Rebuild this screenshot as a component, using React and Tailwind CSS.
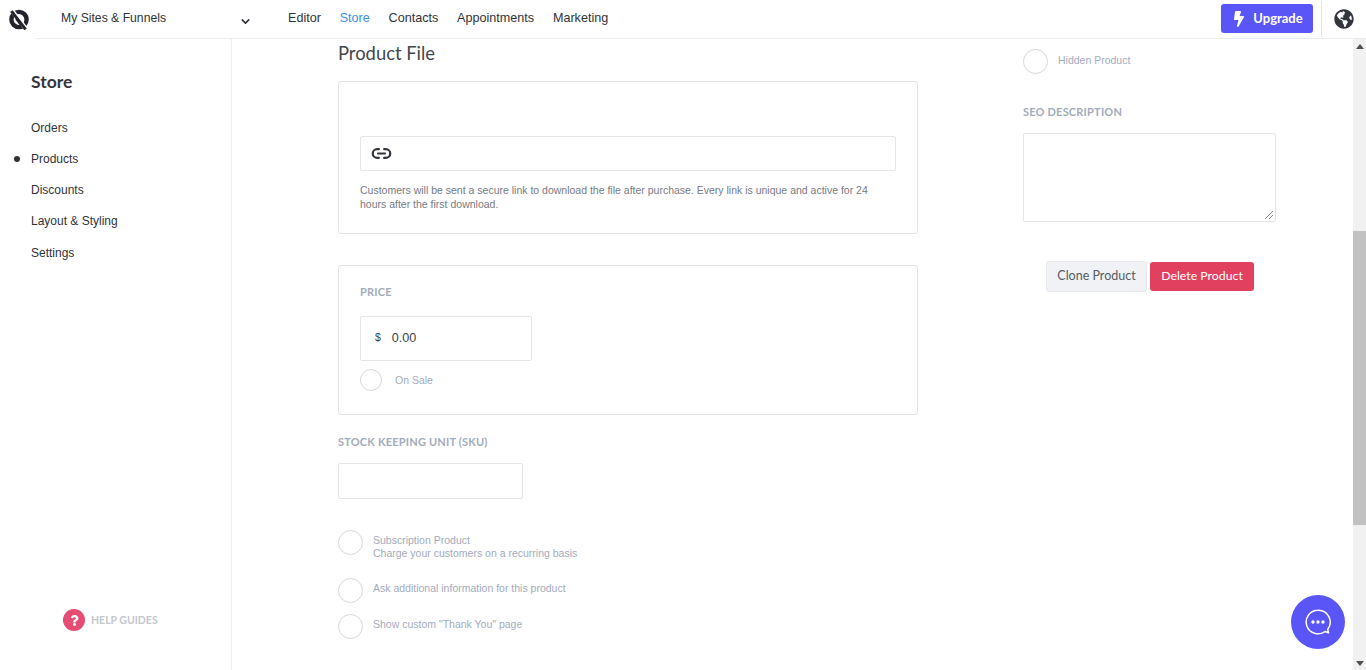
import React from 'react';
import { ChevronDown, Link2 } from 'lucide-react';
import { FaBolt, FaGlobeAmericas, FaQuestion } from 'react-icons/fa';

const navItems = ['Editor', 'Store', 'Contacts', 'Appointments', 'Marketing'];
const sideItems = ['Orders', 'Products', 'Discounts', 'Layout & Styling', 'Settings'];

const Toggle = ({ className = '' }) => (
  <span className={`block shrink-0 rounded-full border border-[#d5d8de] bg-white ${className}`} />
);

const Logo = () => (
  <svg width="20" height="21" viewBox="0 0 20 21">
    <circle cx="10" cy="10.5" r="7.6" fill="none" stroke="#23232b" strokeWidth="4.4" />
    <path d="M3 1.5 L17 20" stroke="#fff" strokeWidth="4.4" />
    <path d="M2.4 2.2 L16.6 20.4" stroke="#23232b" strokeWidth="3" />
    <path d="M7.4 9.6 L12.4 16.2" stroke="#23232b" strokeWidth="2.6" />
  </svg>
);

const ChatIcon = () => (
  <svg width="28" height="28" viewBox="0 0 28 28" fill="none">
    <path
      d="M14 2.2a11.8 11.8 0 1 0 7 21.3l3.6 1.2-.9-3.5A11.8 11.8 0 0 0 14 2.2z"
      stroke="#fff"
      strokeWidth="1.5"
      strokeLinejoin="round"
    />
    <circle cx="9" cy="14" r="1.7" fill="#fff" />
    <circle cx="14" cy="14" r="1.7" fill="#fff" />
    <circle cx="19" cy="14" r="1.7" fill="#fff" />
  </svg>
);

const Header = () => (
  <header className="flex h-[39px] shrink-0">
    <div className="flex w-[36px] shrink-0 items-center pl-[9px]">
      <Logo />
    </div>
    <div className="flex flex-1 items-center border-b border-[#ececee] pb-[1px]">
      <span className="ml-[25px] w-[178px] text-[12.2px] text-[#2f3338]">My Sites &amp; Funnels</span>
      <ChevronDown size={13} strokeWidth={3} className="mt-[5px] text-[#2f3338]" />
      <nav className="ml-[36px] flex gap-[18.8px] text-[12.6px] text-[#2f3338]">
        {navItems.map((item) => (
          <span key={item} className={item === 'Store' ? 'text-[#3f8fe0]' : ''}>
            {item}
          </span>
        ))}
      </nav>
      <button className="ml-auto flex h-[29px] w-[92px] items-center justify-center gap-[6px] rounded-[3px] bg-[#5a55f6] font-['Lato',sans-serif] text-[13px] font-bold text-white">
        <FaBolt size={16} />
        Upgrade
      </button>
      <div className="ml-[8px] flex h-[36px] w-[45px] items-center border-l border-[#e5e5e7] pl-[12px]">
        <FaGlobeAmericas size={20} className="text-[#33363d]" />
      </div>
    </div>
  </header>
);

const Sidebar = () => (
  <aside className="flex w-[232px] shrink-0 flex-col border-r border-[#ececee]">
    <h2 className="ml-[31px] mt-[32px] font-['Lato',sans-serif] text-[17.5px] font-bold leading-[22px] text-[#33373c]">
      Store
    </h2>
    <ul className="mt-[24.6px] flex flex-col gap-[11.3px] text-[12px] text-[#2f3338]">
      {sideItems.map((item) => (
        <li key={item} className="relative h-[20px] pl-[31px] leading-[20px]">
          {item === 'Products' && (
            <span className="absolute left-[14px] top-[7px] h-[6px] w-[6px] rounded-full bg-[#2f3338]" />
          )}
          {item}
        </li>
      ))}
    </ul>
    <div className="ml-[63px] mt-auto mb-[39px] flex items-center gap-[6px]">
      <span className="flex h-[22px] w-[22px] items-center justify-center rounded-full bg-[#e64d74] text-white">
        <FaQuestion size={11} />
      </span>
      <span className="translate-y-[1px] font-['Lato',sans-serif] text-[10.5px] font-bold text-[#c4c7cc]">
        HELP GUIDES
      </span>
    </div>
  </aside>
);

const SectionLabel = ({ children }) => (
  <div className="font-['Lato',sans-serif] text-[11px] font-bold tracking-[0.2px] text-[#a3abbb]">{children}</div>
);

const MainColumn = () => (
  <div className="w-[580px] shrink-0">
    <h1 className="mt-[2px] font-['Lato',sans-serif] text-[18.4px] leading-[24px] text-[#43474d]">Product File</h1>
    <section className="mt-[16px] h-[153px] rounded-[3px] border border-[#e3e5e8] px-[21px] pt-[54px]">
      <div className="flex h-[35px] w-[536px] items-center rounded-[2px] border border-[#e3e5e8] pl-[10px]">
        <Link2 size={21} strokeWidth={2.5} className="text-[#33363d]" />
      </div>
      <p className="mt-[12px] w-[530px] text-[10.5px] leading-[14px] text-[#767b84]">
        Customers will be sent a secure link to download the file after purchase. Every link is unique and active for 24
        hours after the first download.
      </p>
    </section>
    <section className="mt-[31px] h-[150px] rounded-[3px] border border-[#e3e5e8] px-[21px] pt-[18px]">
      <SectionLabel>PRICE</SectionLabel>
      <div className="mt-[15px] flex h-[45px] w-[172px] items-center rounded-[2px] border border-[#e3e5e8] pl-[14px] text-[#3b3f45]">
        <span className="text-[10.5px]">$</span>
        <span className="ml-[11px] text-[12.6px]">0.00</span>
      </div>
      <div className="mt-[8px] flex items-center gap-[13px]">
        <Toggle className="h-[22px] w-[22px]" />
        <span className="translate-y-[1px] text-[10.5px] text-[#a3abbb]">On Sale</span>
      </div>
    </section>
    <div className="mt-[19px]">
      <SectionLabel>STOCK KEEPING UNIT (SKU)</SectionLabel>
    </div>
    <div className="mt-[12px] h-[36px] w-[185px] rounded-[2px] border border-[#e3e5e8]" />
    <div className="mt-[35px] flex items-center gap-[10px]">
      <Toggle className="h-[25px] w-[25px] -translate-y-[4px]" />
      <div className="text-[10.5px] leading-[13px] text-[#a3abbb]">
        <div>Subscription Product</div>
        <div>Charge your customers on a recurring basis</div>
      </div>
    </div>
    <div className="mt-[18px] flex items-center gap-[10px]">
      <Toggle className="h-[25px] w-[25px]" />
      <span className="-translate-y-[1px] text-[10.5px] text-[#a3abbb]">Ask additional information for this product</span>
    </div>
    <div className="mt-[11px] flex items-center gap-[10px]">
      <Toggle className="h-[25px] w-[25px]" />
      <span className="-translate-y-[1px] text-[10.5px] text-[#a3abbb]">Show custom "Thank You" page</span>
    </div>
  </div>
);

const SideColumn = () => (
  <div className="ml-[105px] w-[253px] shrink-0">
    <div className="mt-[10px] flex items-center gap-[10px]">
      <Toggle className="h-[25px] w-[25px]" />
      <span className="-translate-y-[1px] text-[10.5px] text-[#a3abbb]">Hidden Product</span>
    </div>
    <div className="mt-[30px]">
      <SectionLabel>SEO DESCRIPTION</SectionLabel>
    </div>
    <div className="relative mt-[12px] h-[89px] rounded-[2px] border border-[#e3e5e8]">
      <svg width="10" height="10" viewBox="0 0 10 10" className="absolute bottom-[1px] right-[1px]">
        <path d="M1 9 L9 1 M5 9 L9 5" stroke="#8a8a8a" strokeWidth="1" />
      </svg>
    </div>
    <div className="ml-[23px] mt-[39px] flex items-center gap-[3px] font-['Lato',sans-serif]">
      <button className="h-[31px] w-[101px] rounded-[3px] border border-[#e6e8ec] bg-[#f1f2f5] pt-[1px] text-[12.5px] text-[#565b63]">
        Clone Product
      </button>
      <button className="h-[29px] w-[104px] rounded-[3px] bg-[#e1415f] text-[12.3px] text-white">Delete Product</button>
    </div>
  </div>
);

const Scrollbar = () => (
  <div className="flex w-[13px] shrink-0 flex-col items-center bg-[#f1f1f1]">
    <svg width="8" height="5" viewBox="0 0 8 5" className="mt-[5px] shrink-0">
      <polygon points="4,0 8,5 0,5" fill="#505050" />
    </svg>
    <div className="mt-[182px] h-[294px] w-full bg-[#c1c1c1]" />
    <svg width="8" height="5" viewBox="0 0 8 5" className="mb-[4px] mt-auto shrink-0">
      <polygon points="0,0 8,0 4,5" fill="#505050" />
    </svg>
  </div>
);

export default function App() {
  return (
    <div className="relative flex h-[670px] w-[1366px] flex-col overflow-hidden bg-white font-['Liberation_Sans',sans-serif]">
      <Header />
      <div className="flex min-h-0 flex-1">
        <Sidebar />
        <main className="flex flex-1 pl-[106px]">
          <MainColumn />
          <SideColumn />
        </main>
        <Scrollbar />
      </div>
      <button className="absolute bottom-[21px] left-[1291px] flex h-[54px] w-[54px] items-center justify-center rounded-full bg-[#5a55f6]">
        <ChatIcon />
      </button>
    </div>
  );
}
